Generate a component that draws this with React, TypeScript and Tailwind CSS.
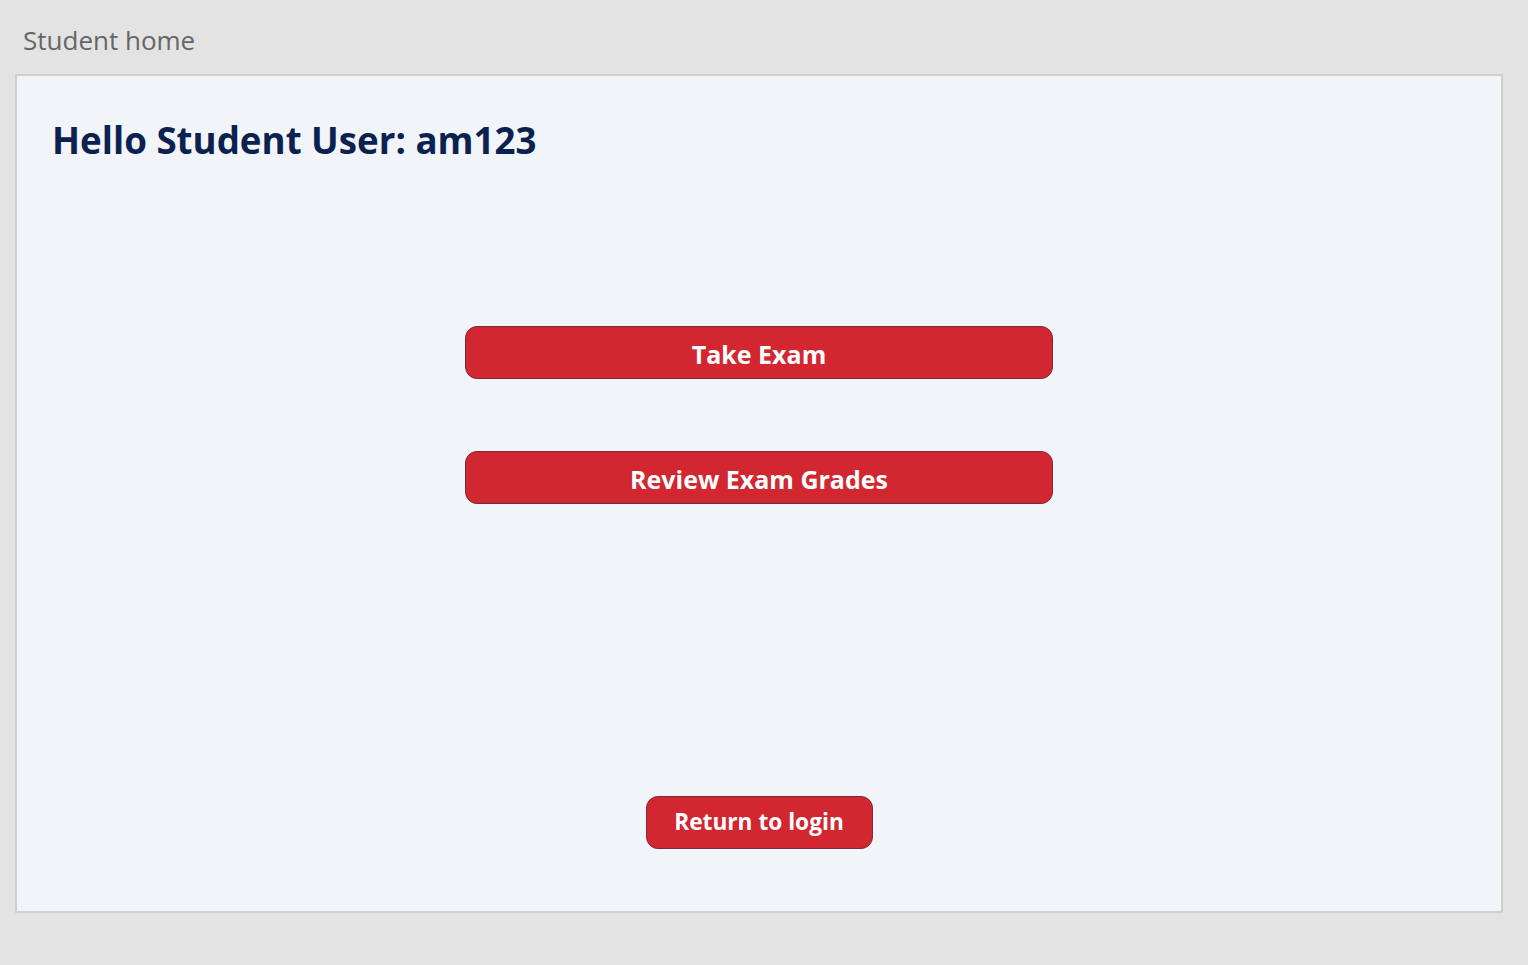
import React from 'react';

const buttons = ['Take Exam', 'Review Exam Grades'];

const App: React.FC = () => {
    return (
        <div
            className="min-h-[965px] w-full bg-[#e3e3e3] px-[15px] pt-[22px]"
            style={{ fontFamily: '"Open Sans", "Noto Sans", sans-serif' }}
        >
            <div className="pl-[8px] text-[26px] leading-[36px] text-[#666666]">Student home</div>

            <div className="mt-[16px] h-[839px] w-[1488px] border-2 border-[#cfcfcf] bg-[#f1f5f9] flex flex-col">
                <h1 className="ml-[35px] mt-[40px] text-[36.7px] font-bold leading-[48px] text-[#0b2150]">
                    Hello Student User: am123
                </h1>

                <div className="mt-[162px] flex flex-col items-center gap-[72px]">
                    {buttons.map((label) => (
                        <button
                            key={label}
                            className="h-[53px] w-[588px] rounded-[12px] border border-[#7b2a3c] bg-[#d22630] pt-[4px] text-[25px] font-bold text-white"
                        >
                            {label}
                        </button>
                    ))}
                </div>

                <div className="mt-auto mb-[62px] flex justify-center">
                    <button className="h-[53px] w-[227px] rounded-[12px] border border-[#7b2a3c] bg-[#d22630] text-[22.7px] font-bold text-white">
                        Return to login
                    </button>
                </div>
            </div>
        </div>
    );
};

export default App;
